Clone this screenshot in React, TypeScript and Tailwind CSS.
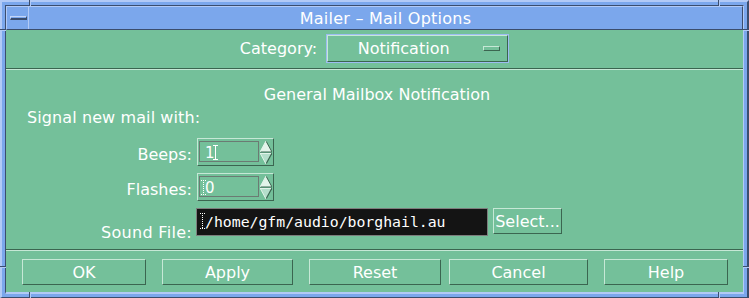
import React from "react";

function IBeam({ dotted, h = 15 }: { dotted?: boolean; h?: number }) {
  return (
    <svg width="5" height={h} viewBox={`0 0 5 ${h}`} className="shrink-0">
      <path
        d={`M0 0.5H5M2.5 0V${h}M0 ${h - 0.5}H5`}
        stroke="#ffffff"
        strokeWidth={dotted ? 1 : 1.5}
        strokeDasharray={dotted ? "1 1" : undefined}
        fill="none"
        shapeRendering="crispEdges"
      />
    </svg>
  );
}

function Arrows() {
  return (
    <svg width="12" height="23" viewBox="0 0 12 23" className="shrink-0">
      <polygon points="6,0 12,11 0,11" fill="#e2f4ea" />
      <path d="M6 0L12 11H0" fill="none" stroke="#3b6550" strokeWidth="1" />
      <path d="M6 0L0 11" fill="none" stroke="#e2f4ea" strokeWidth="1" />
      <polygon points="0,12 12,12 6,23" fill="#b4decb" />
      <path d="M0 12.5H12" stroke="#e2f4ea" strokeWidth="1" />
      <path d="M12 12L6 23" stroke="#3b6550" strokeWidth="1.2" />
      <path d="M0 12L6 23" stroke="#e2f4ea" strokeWidth="1" />
    </svg>
  );
}

function SpinBox({ children }: { children: React.ReactNode }) {
  return (
    <div className="ml-[5px] flex h-[28px] w-[77px] border border-t-[#c6e8d6] border-l-[#c6e8d6] border-b-[#3b6550] border-r-[#3b6550] pl-[1px] pt-[2px]">
      <div className="flex h-[21px] w-[60px] border border-[#6b7b73] pt-[2px] text-[15px] leading-[19px]">
        {children}
      </div>
      <div className="ml-[1px]">
        <Arrows />
      </div>
    </div>
  );
}

function Btn({ label, className }: { label: string; className: string }) {
  return (
    <div
      className={`flex h-[26px] items-center justify-center border border-t-[#c6e8d6] border-l-[#c6e8d6] border-b-[#3b6550] border-r-[#3b6550] text-[16px] leading-[19px] ${className}`}
    >
      {label}
    </div>
  );
}

export default function App() {
  return (
    <div className="relative h-[298px] w-[749px] font-['DejaVu_Sans',sans-serif] text-white">
      <div className="h-full w-full border-t-2 border-l-2 border-r-2 border-b border-t-[#b2caf6] border-l-[#b2caf6] border-r-[#3b4d6d] border-b-[#3b4d6d] bg-[#7ba7ec] p-[3px]">
        <div className="flex h-full flex-col border-t border-l border-r border-b-2 border-t-[#3b4d6d] border-l-[#3b4d6d] border-r-[#b2caf6] border-b-[#b2caf6]">
          {/* title bar */}
          <div className="flex h-[24px] shrink-0 border-t border-l border-b border-r border-t-[#b2caf6] border-l-[#b2caf6] border-b-[#3b4d6d] border-r-[#3b4d6d] bg-[#7ba7ec]">
            <div className="w-[22px] shrink-0 border-r border-r-[#b2caf6] pl-[3px] pt-[9px]">
              <div className="h-[4px] w-[17px] border-t border-l border-b-2 border-r border-t-[#c4d6f8] border-l-[#c4d6f8] border-b-[#3b4d6d] border-r-[#3b4d6d]" />
            </div>
            <div className="flex flex-1 items-center justify-center text-[16px] leading-[19px] tracking-[0.25px]">
              Mailer – Mail Options
            </div>
          </div>
          {/* body */}
          <div className="flex flex-1 flex-col bg-[#74c09a]">
            <div className="flex h-[38px] shrink-0 justify-center gap-[9px] pt-[4px]">
              <div className="pt-[5px] text-[16px] leading-[19px]">Category:</div>
              <div className="h-[29px] w-[183px] border border-[#9dbcf2]">
                <div className="flex h-full items-center border border-t-[#c6e8d6] border-l-[#c6e8d6] border-b-[#3b6550] border-r-[#3b6550]">
                  <div className="flex-1 text-center text-[16px] leading-[19px]">Notification</div>
                  <div className="ml-[4px] mr-[7px] h-[5px] w-[17px] border border-t-[#c6e8d6] border-l-[#c6e8d6] border-b-[#3b6550] border-r-[#3b6550]" />
                </div>
              </div>
            </div>
            <div className="h-[2px] shrink-0 border-t border-b border-t-[#3b6550] border-b-[#c6e8d6]" />
            <div className="flex h-[179px] shrink-0 flex-col text-[16px] leading-[19px]">
              <div className="pl-[5px] pt-[15px] text-center">General Mailbox Notification</div>
              <div className="mt-[4px] pl-[21px] tracking-[0.1px]">Signal new mail with:</div>
              <div className="mt-[11px] flex">
                <div className="w-[186px] pt-[7px] text-right">Beeps:</div>
                <SpinBox>
                  <div className="flex items-start pl-[5px]">
                    <span>1</span>
                    <div className="-ml-[2px] pt-[1px]">
                      <IBeam />
                    </div>
                  </div>
                </SpinBox>
              </div>
              <div className="mt-[7px] flex">
                <div className="w-[186px] pt-[7px] text-right">Flashes:</div>
                <SpinBox>
                  <div className="flex items-start pl-[1px]">
                    <div className="pt-[1px]">
                      <IBeam dotted />
                    </div>
                    <span className="-ml-[1px]">0</span>
                  </div>
                </SpinBox>
              </div>
              <div className="mt-[7px] flex">
                <div className="w-[186px] pt-[15px] text-right tracking-[0.3px]">Sound File:</div>
                <div className="ml-[4px] flex h-[28px] w-[292px] items-start border border-[#7d7d7d] bg-[#141414] pl-[3px] pt-[3px] font-['DejaVu_Sans_Mono',monospace] text-[14.8px] leading-[19px]">
                  <div className="pt-[1px]">
                    <IBeam dotted h={16} />
                  </div>
                  <span>/home/gfm/audio/borghail.au</span>
                </div>
                <Btn label="Select..." className="ml-[5px] w-[69px]" />
              </div>
            </div>
            <div className="h-[2px] shrink-0 border-t border-b border-t-[#3b6550] border-b-[#c6e8d6]" />
            <div className="flex flex-1 pl-[16px] pt-[8px]">
              <Btn label="OK" className="w-[124px]" />
              <Btn label="Apply" className="ml-[16px] w-[131px]" />
              <Btn label="Reset" className="ml-[16px] w-[132px]" />
              <Btn label="Cancel" className="ml-[8px] w-[139px]" />
              <Btn label="Help" className="ml-[16px] w-[124px]" />
            </div>
          </div>
        </div>
      </div>
      {/* frame resize notches */}
      <div className="absolute left-[29px] top-0 h-[6px] w-[1px] bg-[#3b4d6d]" />
      <div className="absolute left-[30px] top-0 h-[6px] w-[1px] bg-[#b2caf6]" />
      <div className="absolute left-[718px] top-0 h-[6px] w-[1px] bg-[#3b4d6d]" />
      <div className="absolute left-[719px] top-0 h-[6px] w-[1px] bg-[#b2caf6]" />
      <div className="absolute left-[29px] top-[292px] h-[6px] w-[1px] bg-[#3b4d6d]" />
      <div className="absolute left-[30px] top-[292px] h-[6px] w-[1px] bg-[#b2caf6]" />
      <div className="absolute left-[718px] top-[292px] h-[6px] w-[1px] bg-[#3b4d6d]" />
      <div className="absolute left-[719px] top-[292px] h-[6px] w-[1px] bg-[#b2caf6]" />
      <div className="absolute left-0 top-[29px] h-[1px] w-[6px] bg-[#3b4d6d]" />
      <div className="absolute left-0 top-[30px] h-[1px] w-[6px] bg-[#b2caf6]" />
      <div className="absolute left-0 top-[266px] h-[1px] w-[6px] bg-[#3b4d6d]" />
      <div className="absolute left-0 top-[267px] h-[1px] w-[6px] bg-[#b2caf6]" />
      <div className="absolute left-[743px] top-[29px] h-[1px] w-[6px] bg-[#3b4d6d]" />
      <div className="absolute left-[743px] top-[30px] h-[1px] w-[6px] bg-[#b2caf6]" />
      <div className="absolute left-[743px] top-[266px] h-[1px] w-[6px] bg-[#3b4d6d]" />
      <div className="absolute left-[743px] top-[267px] h-[1px] w-[6px] bg-[#b2caf6]" />
    </div>
  );
}
